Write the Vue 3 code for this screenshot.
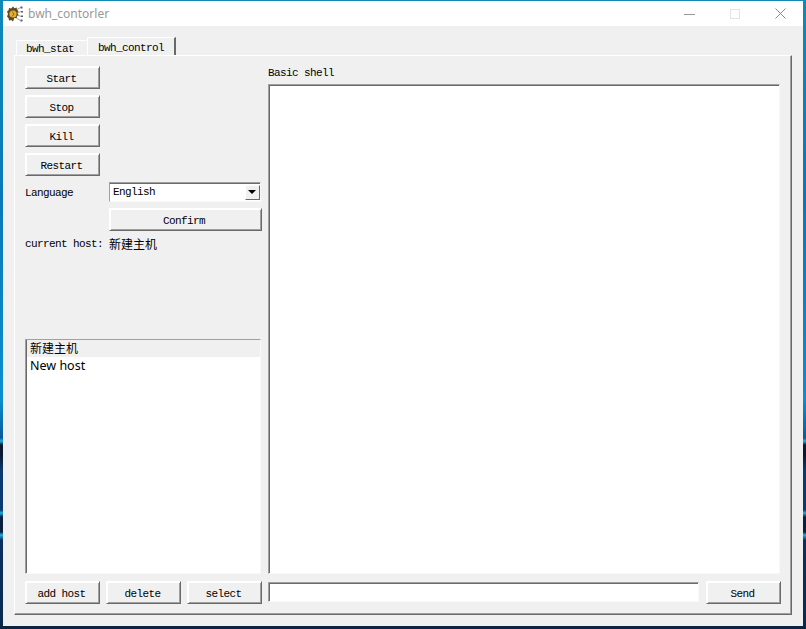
<script setup>
const actions = ['Start', 'Stop', 'Kill', 'Restart']
const hostButtons = ['add host', 'delete', 'select']
</script>

<template>
  <div class="desktop">
    <div class="window">
      <header class="titlebar">
        <svg class="logo" width="18" height="18" viewBox="0 0 18 18">
          <path d="M7 1.500l1.500 1.800 2.200-.8.300 2.300 1.500 1.200-1 2 1 2-1.500 1.200-.3 2.300-2.200-.8L7 16.500l-1.800-1.500-2.200.6-.4-2.300L1 11.500l1-2.500-1-2.500 1.600-1.300.4-2.300 2.200.6z" fill="#5f4a1e" />
          <circle cx="7" cy="9" r="3.600" fill="#e8b030" />
          <path d="M6 6.500l2 2.500-2 2.500" stroke="#8a6418" fill="none" />
          <path d="M11 4.500l3.500-2M12 7.500l3-.8M12 10.500l3 .8M11 13.500l3.500 2" stroke="#9aa0a8" />
          <path d="M14.500 1.500h2v2h-2zM15 6h2v1.500h-2zM15 10.500h2V12h-2zM14.500 14.500h2v2h-2z" fill="#5a5f68" />
        </svg>
        <span class="title">bwh_contorler</span>
        <div class="winctl">
          <svg width="11" height="10" viewBox="0 0 11 10"><path d="M0 5.500h11" stroke="#999" /></svg>
          <svg width="10" height="10" viewBox="0 0 10 10"><rect x=".5" y=".5" width="9" height="9" fill="none" stroke="#e3e3e3" /></svg>
          <svg width="11" height="11" viewBox="0 0 11 11"><path d="M.5.500l10 10M10.500.500l-10 10" stroke="#888" fill="none" /></svg>
        </div>
      </header>

      <main class="client">
        <div class="tabs">
          <div class="tab">bwh_stat</div>
          <div class="tab active">bwh_control</div>
        </div>
        <section class="panel">
          <div class="left">
            <div class="actions">
              <button v-for="a in actions" :key="a" class="btn">{{ a }}</button>
            </div>
            <div class="form">
              <span class="label">Language</span>
              <div class="combo">
                <span>English</span>
                <span class="arrow"></span>
              </div>
              <button class="btn confirm">Confirm</button>
              <span class="label current">current host:</span>
              <span class="host">新建主机</span>
            </div>
            <div class="list">
              <div class="item selected">新建主机</div>
              <div class="item">New host</div>
            </div>
            <div class="hostbtns">
              <button v-for="b in hostButtons" :key="b" class="btn">{{ b }}</button>
            </div>
          </div>
          <div class="right">
            <div class="shell-label">Basic shell</div>
            <div class="shell"></div>
            <div class="sendrow">
              <div class="input"></div>
              <button class="btn">Send</button>
            </div>
          </div>
        </section>
      </main>
    </div>
  </div>
</template>

<style>
html, body { margin: 0; background: #0b2a44; }
</style>

<style scoped>
.desktop {
  width: 806px;
  height: 629px;
  box-sizing: border-box;
  padding: 1px 3px 3px;
  overflow: hidden;
  background: linear-gradient(180deg,
    #0f8ab8 0, #0a78b8 200px, #0a8ed0 400px, #0a5a9a 438px,
    #20b0e0 441px, #0a1a30 445px, #0a1a30 455px, #0a3a70 470px,
    #0a3a70 510px, #20b0e0 513px, #0a2040 517px, #0a2040 532px,
    #20b0e0 535px, #0a3060 540px, #0a2a50 620px, #0b2340 629px);
}
.window {
  height: 100%;
  display: flex;
  flex-direction: column;
  background: #f0f0f0;
}
.titlebar {
  height: 25px;
  flex: none;
  display: flex;
  align-items: center;
  background: #fff;
  padding-left: 3px;
}
.logo { flex: none; }
.title {
  margin-left: 4px;
  font: 12px "Noto Sans", "Open Sans", sans-serif;
  color: #999;
}
.winctl {
  margin-left: auto;
  display: flex;
  align-items: center;
  gap: 35px;
  padding-right: 17px;
}
.client {
  flex: 1;
  min-height: 0;
  display: flex;
  flex-direction: column;
  padding: 11px;
  font: 11px/12px "Liberation Mono", monospace;
  letter-spacing: -0.6px;
  color: #000;
}
.tabs {
  height: 18px;
  flex: none;
  display: flex;
  align-items: flex-end;
  padding-left: 2px;
}
.tab {
  height: 15px;
  width: 71px;
  box-sizing: border-box;
  padding: 1px 4px 0 0;
  border-top: 1px solid #fff;
  border-left: 1px solid #fff;
  text-align: center;
  line-height: 15px;
}
.tab.active {
  height: 18px;
  width: 89px;
  padding: 2px 0 0;
  background: #f0f0f0;
  border-right: 2px solid #696969;
  line-height: 16px;
}
.panel {
  flex: 1;
  min-height: 0;
  display: flex;
  gap: 6px;
  box-sizing: border-box;
  padding: 10px 10px 10px 10px;
  border: 1px solid #fff;
  border-right-color: #696969;
  border-bottom-color: #696969;
  box-shadow: inset -1px -1px 0 #a0a0a0;
}
.btn {
  display: block;
  box-sizing: border-box;
  width: 75px;
  height: 23px;
  padding: 3px 2px 0 0;
  margin: 0;
  background: #f0f0f0;
  font: inherit;
  letter-spacing: inherit;
  color: inherit;
  border: 1px solid #fff;
  border-right-color: #696969;
  border-bottom-color: #696969;
  box-shadow: inset 1px 1px 0 #fff, inset -1px -1px 0 #a0a0a0;
}
.left {
  width: 237px;
  flex: none;
  display: flex;
  flex-direction: column;
}
.actions {
  display: flex;
  flex-direction: column;
  gap: 6px;
}
.form {
  margin-top: 6px;
  display: grid;
  grid-template-columns: 84px 153px;
  grid-template-rows: 20px 23px 24px;
  row-gap: 6px;
  align-items: center;
}
.label { padding-top: 1px; }
.current { margin-top: -10px; padding-top: 0; }
.combo {
  width: 152px;
  height: 20px;
  box-sizing: border-box;
  display: flex;
  align-items: center;
  justify-content: space-between;
  padding-left: 3px;
  background: #fff;
  border: 1px solid #f8f8f8;
  border-top-color: #a0a0a0;
  border-left-color: #a0a0a0;
  box-shadow: inset 0 1px 0 #696969;
}
.arrow {
  position: relative;
  width: 15px;
  height: 15px;
  box-sizing: border-box;
  background: #f0f0f0;
  border: 1px solid #fff;
  border-right-color: #696969;
  border-bottom-color: #696969;
}
.arrow::after {
  content: "";
  position: absolute;
  left: 2px;
  top: 4px;
  border: 4px solid transparent;
  border-top: 4px solid #000;
  border-bottom: 0;
}
.confirm { grid-column: 2; width: 153px; padding-right: 3px; }
.host {
  margin-top: -10px;
  font: 12px/24px "Noto Sans CJK SC", sans-serif;
  letter-spacing: 0;
}
.list {
  margin-top: 78px;
  width: 236px;
  flex: 1;
  min-height: 0;
  box-sizing: border-box;
  background: #fff;
  border: 1px solid #f8f8f8;
  border-top-color: #a0a0a0;
  border-left-color: #a0a0a0;
  box-shadow: inset 1px 1px 0 #696969;
  font: 12.500px/17px "Noto Sans", "Noto Sans CJK SC", sans-serif;
  letter-spacing: 0;
}
.item { padding-left: 4px; height: 17px; }
.item.selected { background: #f0f0f0; font-size: 12px; margin-left: 1px; padding-left: 3px; }
.hostbtns {
  margin-top: 7px;
  display: flex;
  gap: 6px;
}
.right {
  flex: 1;
  min-width: 0;
  display: flex;
  flex-direction: column;
}
.shell-label {
  height: 18px;
  line-height: 14px;
}
.shell {
  flex: 1;
  min-height: 0;
  width: 512px;
  box-sizing: border-box;
  background: #fff;
  border: 1px solid #f8f8f8;
  border-top-color: #a0a0a0;
  border-left-color: #a0a0a0;
  box-shadow: inset 1px 1px 0 #696969;
}
.sendrow {
  margin-top: 7px;
  display: flex;
  justify-content: space-between;
  align-items: flex-start;
}
.input {
  width: 431px;
  height: 20px;
  margin-top: 1px;
  box-sizing: border-box;
  background: #fff;
  border: 1px solid #f8f8f8;
  border-top-color: #a0a0a0;
  border-left-color: #a0a0a0;
  box-shadow: inset 1px 1px 0 #696969;
}
</style>
